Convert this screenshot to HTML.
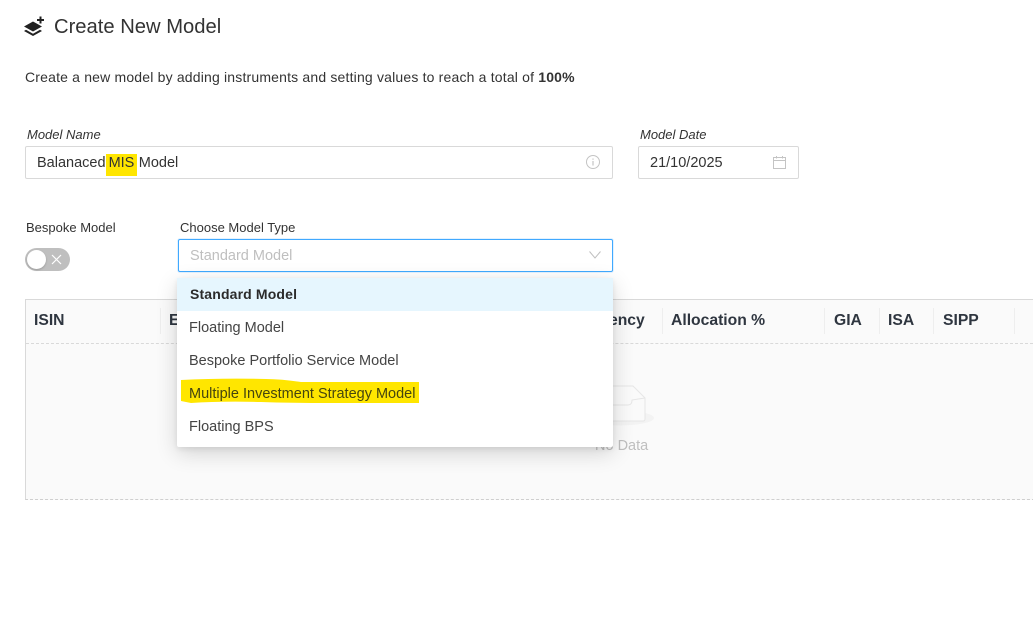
<!DOCTYPE html>
<html><head><meta charset="utf-8"><style>
html,body{margin:0;padding:0;background:#fff}
body{width:1033px;height:626px;position:relative;overflow:hidden;font-family:"Liberation Sans",sans-serif;color:#333}
.a{position:absolute;white-space:nowrap}
.box{position:absolute;box-sizing:border-box;background:#fff;border:1px solid #d9d9d9;border-radius:2px}
.th{position:absolute;top:312px;font-size:15.7px;line-height:18px;font-weight:bold;color:#2f3640;white-space:nowrap}
.sep{position:absolute;top:308px;width:1px;height:26px;background:#eeeeee}
.it{position:absolute;left:189px;font-size:14.5px;line-height:18px;color:#444;white-space:nowrap}
.lb{font-size:13px;line-height:15px}
</style></head><body>
<svg class="a" style="left:22px;top:14px" width="24" height="24" viewBox="0 0 24 24">
<path d="M11 7.500L2 12.500 11 17.500 20 12.500Z" fill="#222"/>
<path d="M4 15.700L2 17 11 22 20 17 18 15.700 11 19.700Z" fill="#222"/>
<path d="M18.500 2.500v7M15 6h7" stroke="#222" stroke-width="2"/>
</svg>
<div class="a" style="left:54px;top:15px;font-size:20.2px;line-height:24px;color:#333">Create New Model</div>
<div class="a" style="left:25px;top:69px;font-size:14px;line-height:16px;letter-spacing:.18px;color:#333">Create a new model by adding instruments and setting values to reach a total of <b>100%</b></div>

<div class="a lb" style="left:27px;top:127px;font-style:italic;color:#333">Model Name</div>
<div class="box" style="left:25px;top:146px;width:588px;height:33px"></div>
<div class="a" style="left:106px;top:154px;width:31px;height:22px;background:#ffe600"></div>
<div class="a" style="left:37px;top:155px;font-size:14.5px;line-height:17px;color:#333">Balanaced <span style="margin-left:-1px;margin-right:.4px">MIS</span> Model</div>
<svg class="a" style="left:585px;top:154px" width="16" height="16" viewBox="0 0 16 16" fill="none" stroke="#c4c4c4">
<circle cx="8" cy="8" r="6.500"/><path d="M8 7v4.500M8 4.500v1.200" stroke-width="1.200"/></svg>

<div class="a lb" style="left:640px;top:127px;font-style:italic;color:#333">Model Date</div>
<div class="box" style="left:638px;top:146px;width:161px;height:33px"></div>
<div class="a" style="left:650px;top:155px;font-size:14.5px;line-height:17px;color:#333">21/10/2025</div>
<svg class="a" style="left:772px;top:155px" width="15" height="15" viewBox="0 0 15 15" fill="none" stroke="#c4c4c4">
<rect x="1.500" y="2.500" width="12" height="11"/><path d="M1.500 5.500h12M4.500 1v2.500M10.500 1v2.500"/></svg>

<div class="a lb" style="left:26px;top:220px;color:#333">Bespoke Model</div>
<div class="a" style="left:25px;top:248px;width:45px;height:23px;border-radius:12px;background:#bfbfbf"></div>
<div class="a" style="left:27px;top:250px;width:19px;height:19px;border-radius:50%;background:#fff;box-shadow:0 1px 2px rgba(0,0,0,.2)"></div>
<svg class="a" style="left:51px;top:254px" width="11" height="11" viewBox="0 0 11 11"><path d="M1 1l9 9M10 1l-9 9" stroke="#fff" stroke-width="1.200"/></svg>

<div class="a lb" style="left:180px;top:220px;color:#333">Choose Model Type</div>

<!-- table -->
<div class="a" style="left:25px;top:299px;width:1020px;height:201px;box-sizing:border-box;background:#fafafa;border:1px solid #d9d9d9;border-bottom:1px dashed #cfcfcf"></div>
<div class="a" style="left:26px;top:343px;width:1007px;height:0;border-top:1px dashed #d9d9d9"></div>
<div class="th" style="left:34px">ISIN</div>
<div class="sep" style="left:160px"></div>
<div class="th" style="left:169px">E</div>
<div class="th" style="left:609px">ency</div>
<div class="sep" style="left:662px"></div>
<div class="th" style="left:671px">Allocation %</div>
<div class="sep" style="left:824px"></div>
<div class="th" style="left:834px">GIA</div>
<div class="sep" style="left:879px"></div>
<div class="th" style="left:888px">ISA</div>
<div class="sep" style="left:933px"></div>
<div class="th" style="left:943px">SIPP</div>
<div class="sep" style="left:1014px"></div>

<svg class="a" style="left:590px;top:380px" width="70" height="50" viewBox="0 0 70 50" fill="none">
<ellipse cx="30" cy="38" rx="34" ry="7.500" fill="#f3f3f3"/>
<path d="M10 6H43L55 18V39Q55 41 53 41H10Z" fill="#fafafa" stroke="#e6e6e6"/>
<path d="M10 25H38Q42 25 42 20L55 18" stroke="#e6e6e6"/>
</svg>
<div class="a" style="left:595px;top:438px;font-size:14.5px;line-height:16px;color:#bfbfbf">No Data</div>

<!-- select -->
<div class="a" style="left:178px;top:239px;width:435px;height:33px;box-sizing:border-box;background:#fff;border:1px solid #40a9ff;border-radius:2px;box-shadow:0 0 0 1px rgba(24,144,255,.12)"></div>
<div class="a" style="left:190px;top:248px;font-size:14.5px;line-height:17px;color:#bfbfbf">Standard Model</div>
<svg class="a" style="left:589px;top:250px" width="12" height="10" viewBox="0 0 12 10" fill="none"><path d="M.5 1.500L6 8 11.500 1.500" stroke="#bfbfbf"/></svg>

<!-- dropdown -->
<div class="a" style="left:177px;top:278px;width:436px;height:169px;background:#fff;border-radius:2px;box-shadow:0 6px 22px rgba(0,0,0,.16),0 2px 6px rgba(0,0,0,.08)"></div>
<div class="a" style="left:177px;top:278px;width:436px;height:33px;background:#e6f6fe"></div>
<div class="it" style="left:190px;top:285px;font-weight:bold;color:#2b2b2b;letter-spacing:.15px;font-size:14px">Standard Model</div>
<div class="it" style="top:319px">Floating Model</div>
<div class="it" style="top:352px">Bespoke Portfolio Service Model</div>
<svg class="a" style="left:181px;top:378px" width="240" height="28" viewBox="0 0 240 28"><path d="M0 2Q40 0 85 1Q100 1 120 4H238V25H150Q110 25 80 24Q40 23 10 25L0 23Z" fill="#ffe600"/></svg>
<div class="it" style="top:385px;color:#45450f">Multiple Investment Strategy Model</div>
<div class="it" style="top:418px">Floating BPS</div>
</body></html>
